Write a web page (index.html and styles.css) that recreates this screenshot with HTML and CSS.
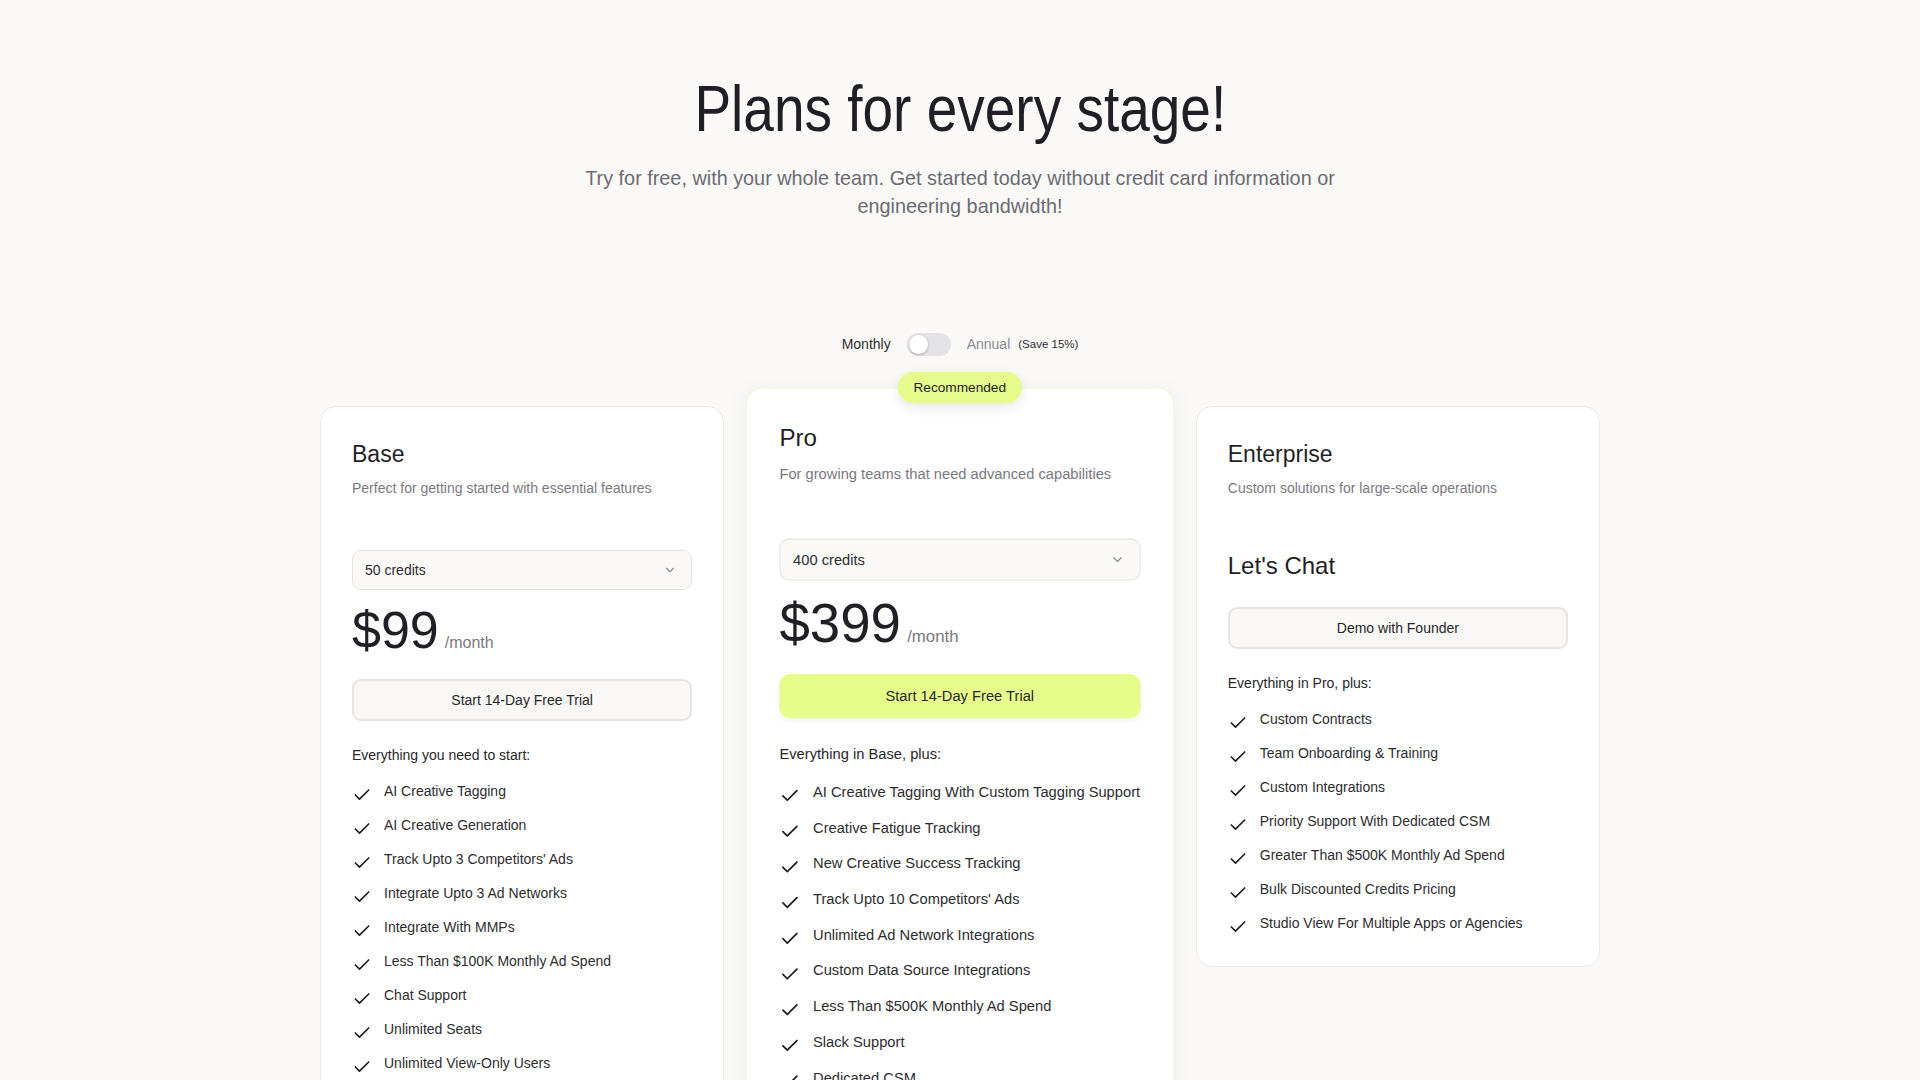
FILE: index.html
```html
<!DOCTYPE html>
<html lang="en">
<head>
<meta charset="utf-8">
<title>Pricing</title>
<link rel="stylesheet" href="styles.css">
</head>
<body>
<main class="page">
  <header class="hero">
    <h1 class="hero-title">Plans for every stage!</h1>
    <p class="hero-sub">Try for free, with your whole team. Get started today without credit card information or engineering bandwidth!</p>
  </header>

  <div class="billing">
    <span class="billing-label billing-label--active">Monthly</span>
    <span class="switch"><span class="switch-knob"></span></span>
    <span class="billing-label billing-label--muted">Annual</span>
    <span class="billing-save">(Save 15%)</span>
  </div>

  <section class="plans">
    <article class="card">
      <div class="card-head">
        <h2 class="card-title">Base</h2>
        <p class="card-desc">Perfect for getting started with essential features</p>
      </div>
      <div class="select">
        <span>50 credits</span>
        <svg class="select-chevron" viewBox="0 0 24 24" width="14" height="14"><path d="m6 9 6 6 6-6"/></svg>
      </div>
      <div class="price"><span class="price-amount">$99</span><span class="price-period">/month</span></div>
      <button class="btn">Start 14-Day Free Trial</button>
      <p class="features-lead">Everything you need to start:</p>
      <ul class="features">
        <li class="feature"><svg class="check" viewBox="0 0 24 24"><path d="M20 6 9 17l-5-5"/></svg><span>AI Creative Tagging</span></li>
        <li class="feature"><svg class="check" viewBox="0 0 24 24"><path d="M20 6 9 17l-5-5"/></svg><span>AI Creative Generation</span></li>
        <li class="feature"><svg class="check" viewBox="0 0 24 24"><path d="M20 6 9 17l-5-5"/></svg><span>Track Upto 3 Competitors' Ads</span></li>
        <li class="feature"><svg class="check" viewBox="0 0 24 24"><path d="M20 6 9 17l-5-5"/></svg><span>Integrate Upto 3 Ad Networks</span></li>
        <li class="feature"><svg class="check" viewBox="0 0 24 24"><path d="M20 6 9 17l-5-5"/></svg><span>Integrate With MMPs</span></li>
        <li class="feature"><svg class="check" viewBox="0 0 24 24"><path d="M20 6 9 17l-5-5"/></svg><span>Less Than $100K Monthly Ad Spend</span></li>
        <li class="feature"><svg class="check" viewBox="0 0 24 24"><path d="M20 6 9 17l-5-5"/></svg><span>Chat Support</span></li>
        <li class="feature"><svg class="check" viewBox="0 0 24 24"><path d="M20 6 9 17l-5-5"/></svg><span>Unlimited Seats</span></li>
        <li class="feature"><svg class="check" viewBox="0 0 24 24"><path d="M20 6 9 17l-5-5"/></svg><span>Unlimited View-Only Users</span></li>
      </ul>
    </article>

    <article class="card card--featured">
      <span class="badge">Recommended</span>
      <div class="card-head">
        <h2 class="card-title">Pro</h2>
        <p class="card-desc">For growing teams that need advanced capabilities</p>
      </div>
      <div class="select">
        <span>400 credits</span>
        <svg class="select-chevron" viewBox="0 0 24 24" width="14" height="14"><path d="m6 9 6 6 6-6"/></svg>
      </div>
      <div class="price"><span class="price-amount">$399</span><span class="price-period">/month</span></div>
      <button class="btn btn--primary">Start 14-Day Free Trial</button>
      <p class="features-lead">Everything in Base, plus:</p>
      <ul class="features">
        <li class="feature"><svg class="check" viewBox="0 0 24 24"><path d="M20 6 9 17l-5-5"/></svg><span>AI Creative Tagging With Custom Tagging Support</span></li>
        <li class="feature"><svg class="check" viewBox="0 0 24 24"><path d="M20 6 9 17l-5-5"/></svg><span>Creative Fatigue Tracking</span></li>
        <li class="feature"><svg class="check" viewBox="0 0 24 24"><path d="M20 6 9 17l-5-5"/></svg><span>New Creative Success Tracking</span></li>
        <li class="feature"><svg class="check" viewBox="0 0 24 24"><path d="M20 6 9 17l-5-5"/></svg><span>Track Upto 10 Competitors' Ads</span></li>
        <li class="feature"><svg class="check" viewBox="0 0 24 24"><path d="M20 6 9 17l-5-5"/></svg><span>Unlimited Ad Network Integrations</span></li>
        <li class="feature"><svg class="check" viewBox="0 0 24 24"><path d="M20 6 9 17l-5-5"/></svg><span>Custom Data Source Integrations</span></li>
        <li class="feature"><svg class="check" viewBox="0 0 24 24"><path d="M20 6 9 17l-5-5"/></svg><span>Less Than $500K Monthly Ad Spend</span></li>
        <li class="feature"><svg class="check" viewBox="0 0 24 24"><path d="M20 6 9 17l-5-5"/></svg><span>Slack Support</span></li>
        <li class="feature"><svg class="check" viewBox="0 0 24 24"><path d="M20 6 9 17l-5-5"/></svg><span>Dedicated CSM</span></li>
      </ul>
    </article>

    <article class="card">
      <div class="card-head">
        <h2 class="card-title">Enterprise</h2>
        <p class="card-desc">Custom solutions for large-scale operations</p>
      </div>
      <p class="chat-title">Let's Chat</p>
      <button class="btn btn--chat">Demo with Founder</button>
      <p class="features-lead">Everything in Pro, plus:</p>
      <ul class="features">
        <li class="feature"><svg class="check" viewBox="0 0 24 24"><path d="M20 6 9 17l-5-5"/></svg><span>Custom Contracts</span></li>
        <li class="feature"><svg class="check" viewBox="0 0 24 24"><path d="M20 6 9 17l-5-5"/></svg><span>Team Onboarding &amp; Training</span></li>
        <li class="feature"><svg class="check" viewBox="0 0 24 24"><path d="M20 6 9 17l-5-5"/></svg><span>Custom Integrations</span></li>
        <li class="feature"><svg class="check" viewBox="0 0 24 24"><path d="M20 6 9 17l-5-5"/></svg><span>Priority Support With Dedicated CSM</span></li>
        <li class="feature"><svg class="check" viewBox="0 0 24 24"><path d="M20 6 9 17l-5-5"/></svg><span>Greater Than $500K Monthly Ad Spend</span></li>
        <li class="feature"><svg class="check" viewBox="0 0 24 24"><path d="M20 6 9 17l-5-5"/></svg><span>Bulk Discounted Credits Pricing</span></li>
        <li class="feature"><svg class="check" viewBox="0 0 24 24"><path d="M20 6 9 17l-5-5"/></svg><span>Studio View For Multiple Apps or Agencies</span></li>
      </ul>
    </article>
  </section>
</main>
</body>
</html>
```

FILE: styles.css
```css
* { box-sizing: border-box; }

html, body {
  margin: 0;
  padding: 0;
}

body {
  background: #faf9f7;
  color: #27272a;
  font-family: "Liberation Sans", Arial, sans-serif;
  font-size: 14px;
  line-height: 20px;
}

.page {
  padding-top: 73px;
  display: flex;
  flex-direction: column;
  align-items: center;
}

.hero {
  display: flex;
  flex-direction: column;
  align-items: center;
  text-align: center;
}

.hero-title {
  margin: 0;
  font-family: "Liberation Sans", Arial, sans-serif;
  font-weight: 400;
  font-size: 65px;
  line-height: 72px;
  color: #1f1f25;
  white-space: nowrap;
  transform: scaleX(0.846);
}

.hero-sub {
  margin: 19px 0 0;
  width: 900px;
  font-family: "Liberation Sans", Arial, sans-serif;
  font-size: 21px;
  line-height: 28px;
  color: #6c6b73;
  transform: scaleX(0.944);
}

.billing {
  margin-top: 112px;
  display: flex;
  align-items: center;
  height: 24px;
}

.billing-label {
  font-size: 14px;
}

.billing-label--active { color: #2d2d30; }
.billing-label--muted { color: #8b8a8f; margin-left: 16px; }

.billing-save {
  font-size: 11.5px;
  color: #2d2d30;
  margin-left: 8px;
}

.switch {
  margin-left: 16px;
  width: 44px;
  height: 23px;
  border-radius: 12px;
  background: #e3e2e6;
  padding: 2px;
  display: flex;
  align-items: center;
}

.switch-knob {
  width: 19px;
  height: 19px;
  border-radius: 50%;
  background: #ffffff;
  box-shadow: 0 1px 3px rgba(0, 0, 0, 0.25);
}

.plans {
  margin-top: 50px;
  width: 1280px;
  display: grid;
  grid-template-columns: repeat(3, 1fr);
  gap: 32px;
  align-items: start;
}

.card {
  position: relative;
  background: #ffffff;
  border: 1px solid #ebe9e7;
  border-radius: 16px;
  padding: 31px 31px 33px;
}

.card--featured {
  transform: scale(1.05);
  transform-origin: 50% 53%;
  border-color: #eef6d2;
  box-shadow: 0 6px 24px rgba(0, 0, 0, 0.05);
  z-index: 1;
}

.badge {
  position: absolute;
  top: -16px;
  left: 50%;
  transform: translateX(-50%);
  height: 30px;
  padding: 0 15px;
  border-radius: 16px;
  background: #e6fb89;
  color: #1f1f25;
  font-size: 13px;
  line-height: 30px;
  white-space: nowrap;
  box-shadow: 0 4px 12px rgba(0, 0, 0, 0.1);
}

.card-head {
  min-height: 112px;
}

.card-title {
  margin: 0;
  font-size: 23px;
  line-height: 32px;
  font-weight: 400;
  color: #1f1f25;
}

.card-desc {
  margin: 8px 0 0;
  font-size: 14px;
  line-height: 20px;
  color: #7a7980;
}

.select {
  height: 40px;
  border: 1px solid #e6e4e2;
  border-radius: 9px;
  background: #faf9f8;
  display: flex;
  align-items: center;
  justify-content: space-between;
  padding: 0 14px 0 12px;
  color: #2d2d30;
}

.select-chevron {
  fill: none;
  stroke: #8b8a8f;
  stroke-width: 2;
  stroke-linecap: round;
  stroke-linejoin: round;
}

.price {
  margin-top: 12px;
  display: flex;
  align-items: baseline;
  height: 56px;
}

.price-amount {
  font-size: 52px;
  line-height: 56px;
  color: #1f1f25;
}

.price-period {
  margin-left: 6px;
  font-size: 16px;
  color: #7a7980;
}

.btn {
  display: block;
  width: 100%;
  height: 42px;
  margin-top: 21px;
  border: 2px solid #e6e4e3;
  border-radius: 9px;
  background: #f9f8f6;
  font-family: inherit;
  font-size: 14px;
  color: #27272a;
  padding: 0;
}

.btn--primary {
  background: #e6fd8a;
  border-color: #e6fd8a;
  border-radius: 10px;
  box-shadow: 0 2px 6px rgba(0, 0, 0, 0.05);
}

.btn--chat {
  margin-top: 25px;
}

.chat-title {
  margin: 0;
  font-size: 24px;
  line-height: 32px;
  color: #1f1f25;
}

.features-lead {
  margin: 24px 0 0;
  font-size: 14px;
  line-height: 20px;
  color: #27272a;
}

.features {
  list-style: none;
  margin: 16px 0 0;
  padding: 0;
  display: flex;
  flex-direction: column;
  gap: 14px;
}

.feature {
  display: flex;
  align-items: flex-start;
  gap: 12px;
  line-height: 20px;
  color: #2d2d30;
  white-space: nowrap;
}

.check {
  flex: none;
  width: 20px;
  height: 20px;
  margin: 4px 0 -4px;
  fill: none;
  stroke: #1f1f25;
  stroke-width: 2;
  stroke-linecap: round;
  stroke-linejoin: round;
}
```
